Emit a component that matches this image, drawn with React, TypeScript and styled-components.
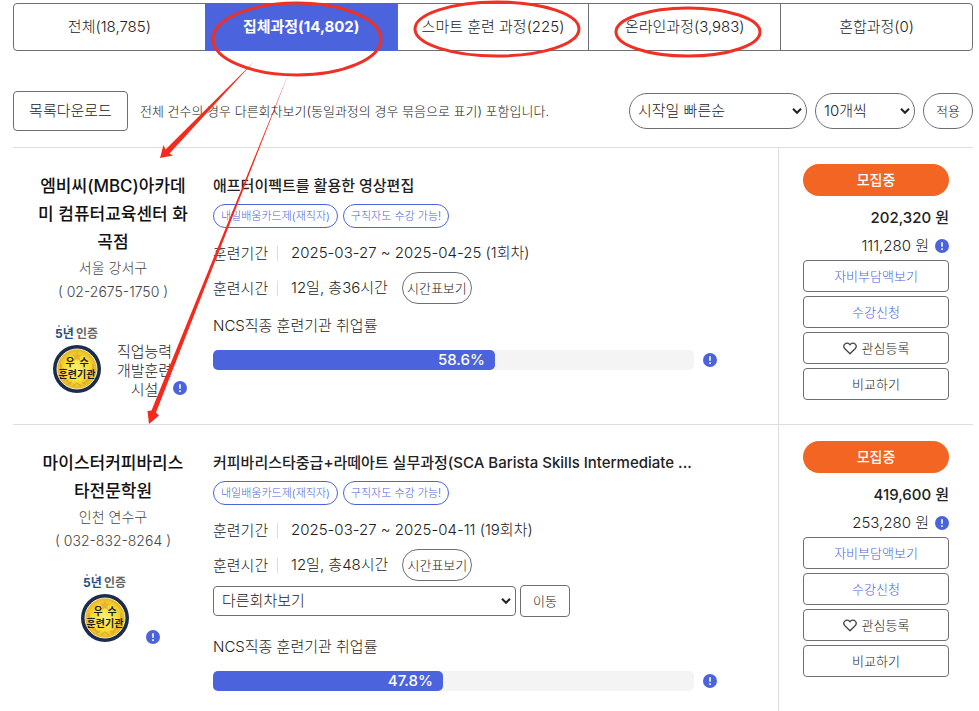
import React from "react";
import styled, { createGlobalStyle, css } from "styled-components";

const GlobalStyle = createGlobalStyle`
  * { box-sizing: border-box; }
  body {
    margin: 0;
    background: #fff;
    color: #222;
    font-family: Inter, "Noto Sans CJK KR", sans-serif;
    font-size: 15px;
    font-weight: 300;
    line-height: 24px;
  }
  button, select { font: inherit; color: inherit; background: #fff; margin: 0; }
  button { cursor: pointer; }
  h2, h3, p, dl, dt, dd, ul { margin: 0; padding: 0; font: inherit; }
`;

const Page = styled.main`
  position: relative;
  padding: 3px 6px 0 13px;
`;

const Tabs = styled.nav`
  display: flex;
  height: 48px;
  border: 1px solid #6d6f76;
  border-radius: 4px;
`;

const Tab = styled.button<{ $active?: boolean }>`
  flex: 1;
  border: 0;
  border-left: 1px solid #6d6f76;
  padding: 0;
  background: transparent;
  &:first-child { border-left: 0; }
  ${(p) =>
    p.$active &&
    css`
      margin: -1px 0;
      border-color: #4c63de;
      background: #4c63de;
      color: #fff;
      font-weight: 700;
    `}
`;

const Toolbar = styled.div`
  display: flex;
  align-items: center;
  gap: 8px;
  padding: 40px 0 16px;
  border-bottom: 1px solid #ddd;
`;

const OutlineButton = styled.button`
  border: 1px solid #6d6f76;
  border-radius: 4px;
  padding: 0;
`;

const DownloadButton = styled(OutlineButton)`
  width: 115px;
  height: 40px;
`;

const Notice = styled.p`
  flex: 1;
  margin-left: 4px;
  font-size: 13px;
  white-space: nowrap;
`;

const SelectWrap = styled.span<{ $width: number }>`
  position: relative;
  width: ${(p) => p.$width}px;
  svg {
    position: absolute;
    right: 5px;
    top: 50%;
    margin-top: -4px;
    pointer-events: none;
  }
`;

const Select = styled.select<{ $round?: boolean }>`
  display: block;
  appearance: none;
  width: 100%;
  height: ${(p) => (p.$round ? 36 : 30)}px;
  padding: 0 20px 0 8px;
  border: 1px solid #6d6f76;
  border-radius: ${(p) => (p.$round ? 18 : 4)}px;
`;

const ApplyButton = styled(OutlineButton)`
  width: 50px;
  height: 36px;
  border-radius: 18px;
  font-size: 13px;
`;

const Course = styled.article`
  display: grid;
  grid-template-columns: 200px 1fr 195px;
  & + & { border-top: 1px solid #ddd; }
`;

const School = styled.section`
  padding: 24px 24px 20px;
  text-align: center;
`;

const SchoolName = styled.h2`
  color: #111;
  font-size: 17px;
  font-weight: 500;
  line-height: 28px;
  word-break: break-all;
`;

const Contact = styled.p`
  color: #444;
  font-size: 14px;
`;

const Marks = styled.div`
  display: flex;
  justify-content: center;
  align-items: flex-end;
  margin: 21px 0 0 14px;
  > svg, > button { margin-bottom: 4px; }
`;

const Facility = styled.span`
  margin: 0 1px 0 16px;
  line-height: 19px;
  white-space: pre-line;
`;

const Details = styled.section`
  padding: 26px 61px 20px 0;
`;

const Title = styled.h3`
  font-weight: 500;
  white-space: nowrap;
`;

const Tags = styled.ul`
  display: flex;
  gap: 5px;
  margin: 6px 0 12px;
  list-style: none;
`;

const Tag = styled.li`
  padding: 0 7px;
  border: 1px solid #4c63de;
  border-radius: 12px;
  color: #4c63de;
  font-size: 11px;
  line-height: 22px;
`;

const Fact = styled.dl<{ $tall?: boolean }>`
  display: flex;
  align-items: center;
  height: ${(p) => (p.$tall ? 32 : 26)}px;
  margin-top: ${(p) => (p.$tall ? 6 : 0)}px;
  dt { width: 65px; border-right: 1px solid #ddd; line-height: 15px; }
  dd { display: flex; align-items: center; margin-left: 13px; }
`;

const TimetableButton = styled(OutlineButton)`
  width: 70px;
  height: 32px;
  margin-left: 14px;
  border-radius: 16px;
  font-size: 13px;
`;

const RoundPicker = styled.form`
  display: flex;
  align-items: center;
  gap: 4px;
  padding: 4px 0 8px;
`;

const GoButton = styled(OutlineButton)`
  width: 50px;
  height: 32px;
  font-size: 13px;
`;

const RateLabel = styled.p`
  padding: 10px 0 12px;
`;

const RateRow = styled.div`
  display: flex;
  align-items: center;
  gap: 9px;
`;

const Track = styled.div`
  flex: 1;
  height: 20px;
  border-radius: 5px;
  background: #f4f4f5;
`;

const Fill = styled.div`
  height: 20px;
  padding-right: 10px;
  border-radius: 5px;
  background: #4c63de;
  color: #fff;
  font-weight: 500;
  line-height: 20px;
  text-align: right;
`;

const InfoButton = styled.button`
  flex: none;
  display: block;
  width: 14px;
  height: 14px;
  padding: 0;
  border: 0;
  background: transparent;
  svg { display: block; }
`;

const Actions = styled.aside`
  display: flex;
  flex-direction: column;
  padding: 16px 24px 24px;
  border-left: 1px solid #ddd;
`;

const Status = styled.strong`
  border-radius: 16px;
  background: #f26522;
  color: #fff;
  font-size: 14px;
  font-weight: 500;
  line-height: 32px;
  text-align: center;
`;

const Prices = styled.div`
  padding-top: 8px;
  line-height: 28px;
  text-align: right;
`;

const FullPrice = styled.p`
  font-weight: 500;
`;

const OwnPrice = styled.p`
  display: flex;
  justify-content: flex-end;
  align-items: center;
  gap: 6px;
`;

const ActionButton = styled(OutlineButton)<{ $accent?: boolean }>`
  display: flex;
  justify-content: center;
  align-items: center;
  gap: 5px;
  height: 32px;
  font-size: 13px;
  color: ${(p) => (p.$accent ? "#4c63de" : "#222")};
  & + & { margin-top: 4px; }
`;

const Overlay = styled.svg`
  position: absolute;
  left: 0;
  top: 0;
  pointer-events: none;
`;

const Info = ({ label }: { label: string }) => (
  <InfoButton type="button" aria-label={label}>
    <svg width="14" height="14" viewBox="0 0 14 14">
      <circle cx="7" cy="7" r="7" fill="#4c63de" />
      <path d="M7 3.2v4.6M7 9.2v1.7" stroke="#fff" strokeWidth="1.6" />
    </svg>
  </InfoButton>
);

const Chevron = () => (
  <svg width="10" height="8" viewBox="0 0 10 8" fill="none">
    <path d="M1 1.8l4 4 4-4" stroke="#222" strokeWidth="2" />
  </svg>
);

const Heart = () => (
  <svg width="14" height="13" viewBox="0 0 14 13" fill="none">
    <path
      d="M7 11.8L1.9 6.8C.6 5.4.6 3.3 1.8 2.1 3.1.8 5.2.8 6.4 2.1L7 2.8l.6-.7c1.2-1.3 3.3-1.3 4.6 0 1.2 1.2 1.2 3.3-.1 4.7z"
      stroke="#444"
      strokeWidth="1.3"
      strokeLinejoin="round"
    />
  </svg>
);

const Seal = () => (
  <svg width="48" height="70" viewBox="0 0 48 70" role="img" aria-label="5년 인증 우수훈련기관">
    <defs>
      <radialGradient id="gold">
        <stop offset="0" stopColor="#fdf07a" />
        <stop offset="0.65" stopColor="#f8dc2e" />
        <stop offset="1" stopColor="#e6b22c" />
      </radialGradient>
    </defs>
    <g fontSize="12" fontWeight="700">
      <text x="2" y="13" fill="#1c4f80">5년</text>
      <text x="23" y="13" fill="#666">인증</text>
    </g>
    <circle cx="6" cy="1" r="0.8" fill="#444" />
    <circle cx="15" cy="1" r="0.8" fill="#444" />
    <circle cx="24" cy="44" r="24" fill="#1b2c4d" />
    <circle cx="24" cy="44" r="20" fill="url(#gold)" stroke="#f8eeb0" />
    <path d="M24 26l1.600 3.400 3.600.4-2.700 2.500.8 3.700-3.300-1.900-3.300 1.900.8-3.700-2.700-2.500 3.600-.4z" fill="#e7b52b" />
    <path
      d="M8 39c-1 8 2 15 10 20M40 39c1 8-2 15-10 20M11 55h4M15 59l4-2M37 55h-4M33 59l-4-2M20 61l4-3 4 3"
      stroke="#d09a28"
      strokeWidth="1.4"
      fill="none"
      opacity="0.6"
    />
    <g fill="#1c1c1c" fontWeight="700" textAnchor="middle" fontSize="10">
      <text x="17" y="41">우</text>
      <text x="31" y="41">수</text>
      <text x="24" y="53">훈련기관</text>
    </g>
  </svg>
);

const Annotations = () => (
  <Overlay width="780" height="430" viewBox="0 0 780 430" aria-hidden="true">
    <g fill="none" stroke="#ee3124" strokeWidth="3">
      <ellipse cx="297" cy="39" rx="84" ry="36" />
      <ellipse cx="497" cy="29" rx="82" ry="27" />
      <ellipse cx="688" cy="32" rx="72" ry="24" />
    </g>
    <g fill="#f5291c">
      <path d="M255 60.5L169.500 153.500 173 155.500 160 158 163.500 145 165.500 149.500z" />
      <path d="M290 70L156 412.500 159 415.500 149 424 147.500 411 151.500 410.500z" />
    </g>
  </Overlay>
);

type CourseData = {
  school: string;
  area: string;
  phone: string;
  facility?: string;
  title: string;
  period: string;
  time: string;
  rounds?: boolean;
  rate: number;
  price: string;
  own: string;
};

const courses: CourseData[] = [
  {
    school: "엠비씨(MBC)아카데미 컴퓨터교육센터 화곡점",
    area: "서울 강서구",
    phone: "( 02-2675-1750 )",
    facility: "직업능력\n개발훈련\n시설",
    title: "애프터이펙트를 활용한 영상편집",
    period: "2025-03-27 ~ 2025-04-25 (1회차)",
    time: "12일, 총36시간",
    rate: 58.6,
    price: "202,320 원",
    own: "111,280 원",
  },
  {
    school: "마이스터커피바리스타전문학원",
    area: "인천 연수구",
    phone: "( 032-832-8264 )",
    title: "커피바리스타중급+라떼아트 실무과정(SCA Barista Skills Intermediate ...",
    period: "2025-03-27 ~ 2025-04-11 (19회차)",
    time: "12일, 총48시간",
    rounds: true,
    rate: 47.8,
    price: "419,600 원",
    own: "253,280 원",
  },
];

const tabs = ["전체(18,785)", "집체과정(14,802)", "스마트 훈련 과정(225)", "온라인과정(3,983)", "혼합과정(0)"];

const CourseRow = ({ c }: { c: CourseData }) => (
  <Course>
    <School>
      <SchoolName>{c.school}</SchoolName>
      <Contact>{c.area}</Contact>
      <Contact>{c.phone}</Contact>
      <Marks>
        <Seal />
        <Facility>{c.facility}</Facility>
        <Info label="인증 안내" />
      </Marks>
    </School>
    <Details>
      <Title>{c.title}</Title>
      <Tags>
        <Tag>내일배움카드제(재직자)</Tag>
        <Tag>구직자도 수강 가능!</Tag>
      </Tags>
      <Fact>
        <dt>훈련기간</dt>
        <dd>{c.period}</dd>
      </Fact>
      <Fact $tall>
        <dt>훈련시간</dt>
        <dd>
          {c.time}
          <TimetableButton type="button">시간표보기</TimetableButton>
        </dd>
      </Fact>
      {c.rounds && (
        <RoundPicker>
          <SelectWrap $width={303}>
            <Select aria-label="다른회차보기">
              <option>다른회차보기</option>
            </Select>
            <Chevron />
          </SelectWrap>
          <GoButton type="button">이동</GoButton>
        </RoundPicker>
      )}
      <RateLabel>NCS직종 훈련기관 취업률</RateLabel>
      <RateRow>
        <Track>
          <Fill style={{ width: `${c.rate}%` }}>{c.rate}%</Fill>
        </Track>
        <Info label="취업률 안내" />
      </RateRow>
    </Details>
    <Actions>
      <Status>모집중</Status>
      <Prices>
        <FullPrice>{c.price}</FullPrice>
        <OwnPrice>
          {c.own}
          <Info label="자비부담액 안내" />
        </OwnPrice>
      </Prices>
      <ActionButton type="button" $accent>자비부담액보기</ActionButton>
      <ActionButton type="button" $accent>수강신청</ActionButton>
      <ActionButton type="button">
        <Heart />
        관심등록
      </ActionButton>
      <ActionButton type="button">비교하기</ActionButton>
    </Actions>
  </Course>
);

export default function App() {
  return (
    <Page>
      <GlobalStyle />
      <Tabs>
        {tabs.map((t, i) => (
          <Tab key={t} type="button" $active={i === 1}>
            {t}
          </Tab>
        ))}
      </Tabs>
      <Toolbar>
        <DownloadButton type="button">목록다운로드</DownloadButton>
        <Notice>전체 건수의 경우 다른회차보기(동일과정의 경우 묶음으로 표기) 포함입니다.</Notice>
        <SelectWrap $width={178}>
          <Select $round aria-label="정렬">
            <option>시작일 빠른순</option>
          </Select>
          <Chevron />
        </SelectWrap>
        <SelectWrap $width={100}>
          <Select $round aria-label="표시 개수">
            <option>10개씩</option>
          </Select>
          <Chevron />
        </SelectWrap>
        <ApplyButton type="button">적용</ApplyButton>
      </Toolbar>
      {courses.map((c) => (
        <CourseRow key={c.school} c={c} />
      ))}
      <Annotations />
    </Page>
  );
}
